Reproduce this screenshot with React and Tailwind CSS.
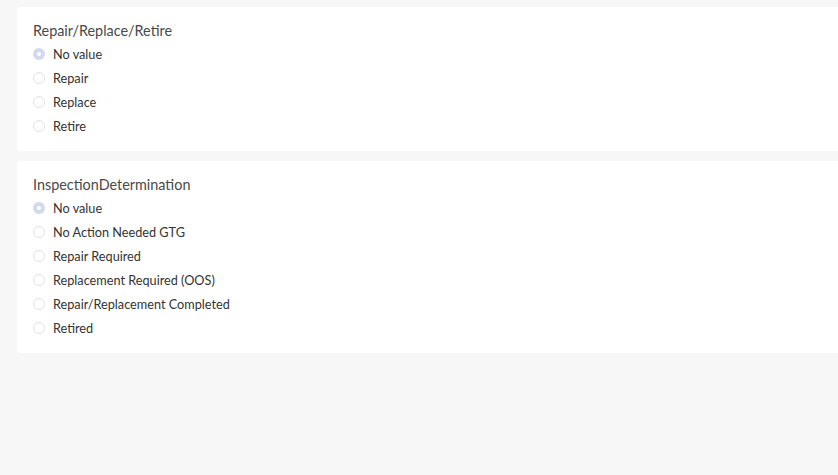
const groups = [
  {
    label: "Repair/Replace/Retire",
    options: ["No value", "Repair", "Replace", "Retire"],
  },
  {
    label: "InspectionDetermination",
    options: [
      "No value",
      "No Action Needed GTG",
      "Repair Required",
      "Replacement Required (OOS)",
      "Repair/Replacement Completed",
      "Retired",
    ],
  },
];

function Radio({ checked }) {
  if (checked) {
    return (
      <span className="w-3 h-3 rounded-full bg-[#d3d8ef] flex items-center justify-center">
        <span className="w-1 h-1 rounded-full bg-white" />
      </span>
    );
  }
  return <span className="w-3 h-3 rounded-full bg-white border border-[#e2e2e2]" />;
}

export default function App() {
  return (
    <div
      className="w-[838px] h-[475px] bg-[#f7f7f7] pl-[17px] pt-[7px] flex flex-col gap-[10px] overflow-hidden"
      style={{ fontFamily: "Lato, 'Open Sans', sans-serif" }}
    >
      {groups.map((g) => (
        <div key={g.label} className="bg-white rounded-l-[3px] pt-[11px] pb-[13px] pl-4">
          <div className="h-6 flex items-center pt-px text-[14.4px] text-[#4a4a4a]">{g.label}</div>
          {g.options.map((o, i) => (
            <div key={o} className="h-6 flex items-center gap-2">
              <Radio checked={i === 0} />
              <span className="pt-[2px] text-[12.7px] text-[#333]">{o}</span>
            </div>
          ))}
        </div>
      ))}
    </div>
  );
}
